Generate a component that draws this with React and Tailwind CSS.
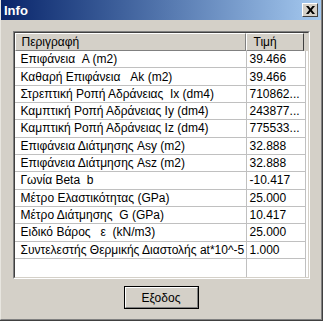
import React from "react";

const rows = [
  ["Επιφάνεια  A (m2)", "39.466"],
  ["Καθαρή Επιφάνεια   Ak (m2)", "39.466"],
  ["Στρεπτική Ροπή Αδράνειας  Ix (dm4)", "710862..."],
  ["Καμπτική Ροπή Αδράνειας Iy (dm4)", "243877..."],
  ["Καμπτική Ροπή Αδράνειας Iz (dm4)", "775533..."],
  ["Επιφάνεια Διάτμησης Asy (m2)", "32.888"],
  ["Επιφάνεια Διάτμησης Asz (m2)", "32.888"],
  ["Γωνία Beta  b", "-10.417"],
  ["Μέτρο Ελαστικότητας (GPa)", "25.000"],
  ["Μέτρο Διάτμησης  G (GPa)", "10.417"],
  ["Ειδικό Βάρος   ε  (kN/m3)", "25.000"],
  ["Συντελεστής Θερμικής Διαστολής at*10^-5", "1.000"],
];

function CloseButton() {
  return (
    <div className="w-[16px] h-[14px] bg-[#d4d0c8] border-t border-l border-t-white border-l-white border-r border-b border-r-[#404040] border-b-[#404040] flex items-center justify-center">
      <svg width="9" height="8" viewBox="0 0 9 8">
        <path d="M0 0h2.5L4.5 2.5 6.5 0H9L5.8 4 9 8H6.5L4.5 5.5 2.5 8H0l3.2-4z" fill="#000" />
      </svg>
    </div>
  );
}

export default function App() {
  return (
    <div className="w-[323px] h-[321px] border-r border-b border-r-[#404040] border-b-[#404040] font-['Liberation_Sans',sans-serif] text-[12px] text-black">
      <div className="h-full flex flex-col bg-[#d4d0c8] border-l border-l-[#e8e6e0] border-r border-b border-r-[#808080] border-b-[#808080]">
        {/* Title bar */}
        <div className="h-[20px] flex items-center justify-between pl-[3px] pr-[3px] bg-gradient-to-r from-[#0a246a] to-[#a6caf0]">
          <span className="text-white font-bold text-[13px] leading-none">Info</span>
          <CloseButton />
        </div>

        {/* Body */}
        <div className="flex-1 flex flex-col items-center pt-[11px]">
          <div className="w-[297px] h-[248px] border border-t-[#808080] border-l-[#808080] border-r-white border-b-white">
            <div className="h-full flex flex-col border border-t-[#404040] border-l-[#404040] border-r-[#d4d0c8] border-b-[#d4d0c8] bg-white">
              {/* Header */}
              <div className="h-[18px] flex bg-[#d4d0c8] shrink-0">
                <div className="w-[231px] flex items-center pl-[6px] border-t border-l border-t-white border-l-white border-r border-b border-r-[#808080] border-b-[#808080]">
                  Περιγραφή
                </div>
                <div className="w-[58px] flex items-center pl-[7px] border-t border-l border-t-white border-l-white border-r border-b border-r-[#404040] border-b-[#808080]">
                  Τιμή
                </div>
                <div className="flex-1" />
              </div>
              {/* Rows */}
              {rows.map(([label, value], i) => (
                <div key={i} className="h-[17.33px] flex shrink-0">
                  <div className="w-[232px] flex items-center pl-[6px] border-r border-b border-[#c0c0c0] whitespace-pre overflow-hidden">
                    {label}
                  </div>
                  <div className="w-[59px] flex items-center pl-[3px] border-r border-b border-[#c0c0c0] whitespace-pre overflow-hidden">
                    {value}
                  </div>
                  <div className="flex-1" />
                </div>
              ))}
              <div className="flex-1 flex">
                <div className="w-[232px] border-r border-[#c0c0c0]" />
                <div className="w-[59px] border-r border-[#c0c0c0]" />
              </div>
            </div>
          </div>

          {/* Button */}
          <div className="mt-[7px] w-[75px] h-[23px] border border-black">
            <div className="h-full flex items-center justify-center border-t border-l border-t-white border-l-white border-r border-b border-r-[#808080] border-b-[#808080]">
              Εξοδος
            </div>
          </div>
        </div>
      </div>
    </div>
  );
}
